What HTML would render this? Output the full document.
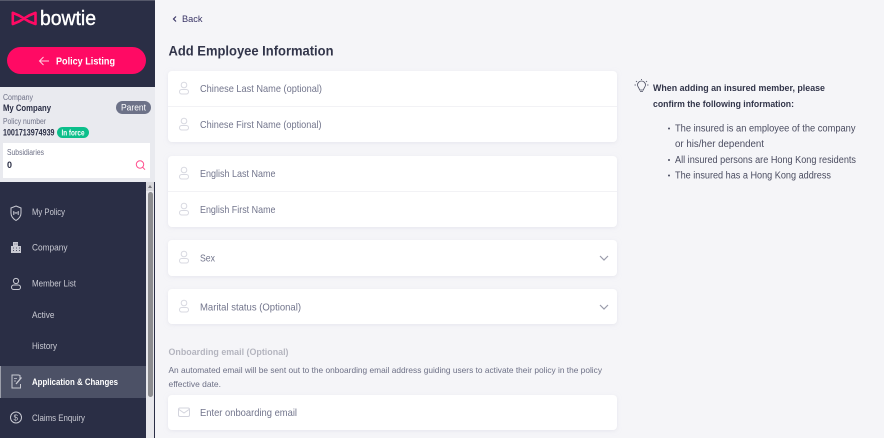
<!DOCTYPE html>
<html><head><meta charset="utf-8"><style>
html,body{margin:0;padding:0;width:884px;height:438px;overflow:hidden;background:#f5f5f8}
svg{display:block}
text{font-family:"Liberation Sans",sans-serif}
</style></head><body>
<svg width="884" height="438" viewBox="0 0 884 438" xmlns="http://www.w3.org/2000/svg">
<defs>
<filter id="s" x="-5%" y="-20%" width="110%" height="140%"><feDropShadow dx="0" dy="1" stdDeviation="2" flood-color="#dcdce6" flood-opacity=".6"/></filter>
<g id="p" fill="none" stroke="#d8d9e1" stroke-width="1"><circle cx="0" cy="-3" r="2.8"/><rect x="-4.500" y="1.500" width="9" height="4.500" rx="2.250"/></g>
</defs>
<rect width="884" height="438" fill="#f5f5f8"/>

<!-- sidebar -->
<rect width="155" height="87" fill="#2a2e45"/>
<rect y="0" width="155" height="1" fill="#55586a"/>
<rect y="87" width="155" height="95" fill="#e9eaef"/>
<rect y="182" width="155" height="256" fill="#2a2e45"/>
<path d="M12.800 12.800 L19 15.500 L24 18.500 L29 15.500 L35.500 12.800 V24 L29 21.500 L24 18.500 L19 21.500 L12.800 24 Z" fill="none" stroke="#ff0a64" stroke-width="2.600" stroke-linejoin="round"/>
<text x="40" y="25" font-size="20" fill="#fff" stroke="#fff" stroke-width=".4" textLength="56" lengthAdjust="spacingAndGlyphs">bowtie</text>
<rect x="7" y="47" width="139" height="27" rx="13.500" fill="#ff0a64"/>
<path d="M49 61 H39.500 M43.500 57 L39.500 61 L43.500 65" fill="none" stroke="#ffd0e0" stroke-width="1"/>
<text x="56" y="64.500" font-size="10.500" font-weight="bold" fill="#fff" textLength="59" lengthAdjust="spacingAndGlyphs">Policy Listing</text>

<text x="3" y="100" font-size="8" fill="#6d7086" textLength="30" lengthAdjust="spacingAndGlyphs">Company</text>
<text x="3" y="111" font-size="9" font-weight="bold" fill="#2a2e45" textLength="48" lengthAdjust="spacingAndGlyphs">My Company</text>
<rect x="116" y="101" width="35" height="13" rx="6.500" fill="#6d7288"/>
<text x="121" y="110.500" font-size="9.500" fill="#fff" textLength="25" lengthAdjust="spacingAndGlyphs">Parent</text>
<text x="3" y="124" font-size="8" fill="#6d7086" textLength="43" lengthAdjust="spacingAndGlyphs">Policy number</text>
<text x="3" y="135.500" font-size="9.500" font-weight="bold" fill="#2a2e45" textLength="51.500" lengthAdjust="spacingAndGlyphs">1001713974939</text>
<rect x="57" y="127" width="32" height="11" rx="5.500" fill="#0cbf8b"/>
<text x="61.500" y="135.500" font-size="8" font-weight="bold" fill="#fff" textLength="23" lengthAdjust="spacingAndGlyphs">In force</text>
<rect x="3" y="143" width="147" height="35" fill="#fff"/>
<text x="7" y="155" font-size="8" fill="#6d7086" textLength="37" lengthAdjust="spacingAndGlyphs">Subsidiaries</text>
<text x="7" y="168" font-size="9" font-weight="bold" fill="#2a2e45">0</text>
<circle cx="140" cy="164.500" r="3.700" fill="none" stroke="#ff4d8d" stroke-width="1"/>
<path d="M142.700 167.300 L145 169.700" stroke="#ff4d8d" stroke-width="1"/>

<!-- scrollbar -->
<rect x="146" y="182" width="8" height="256" fill="#e8e8ec"/>
<rect x="146" y="182" width="8" height="9" fill="#d8d8dc"/>
<path d="M148 188 L150 185 L152 188 Z" fill="#77777c"/>
<rect x="148" y="192" width="5" height="205" rx="2.500" fill="#8d8d90"/>

<!-- nav -->
<rect y="366" width="146" height="32" fill="#4c5166"/>
<rect y="366" width="1" height="32" fill="#9b9eaa"/>
<g fill="#c9cad3" font-size="9.500">
<text x="32" y="215" textLength="33" lengthAdjust="spacingAndGlyphs">My Policy</text>
<text x="32" y="250.500" textLength="35.500" lengthAdjust="spacingAndGlyphs">Company</text>
<text x="32" y="286.500" textLength="44" lengthAdjust="spacingAndGlyphs">Member List</text>
<text x="32" y="318" textLength="22.500" lengthAdjust="spacingAndGlyphs">Active</text>
<text x="32" y="349" textLength="25" lengthAdjust="spacingAndGlyphs">History</text>
<text x="32" y="421" textLength="53" lengthAdjust="spacingAndGlyphs">Claims Enquiry</text>
</g>
<text x="32" y="385" font-size="9.500" font-weight="bold" fill="#fff" textLength="86" lengthAdjust="spacingAndGlyphs">Application &amp; Changes</text>
<g fill="none" stroke="#c9cad3" stroke-width="1">
<path d="M16 206 L21 208 V213 C21 217 18.500 219 16 220.500 C13.500 219 11 217 11 213 V208 Z"/>
<path d="M13.500 211.500 L16 213 L18.500 211.500 V214.500 L16 213 L13.500 214.500 Z" stroke-width=".7"/>
<path d="M20 379 V375.500 L18.500 375 H12 V388 H20.500 V384"/>
<path d="M16 384 L21.500 377.500" stroke-width="1.300"/>
<path d="M14 378.500 H17 M14 381 H16" stroke-width=".7"/>
<circle cx="16" cy="417.500" r="5.500"/>
<text x="13.500" y="420.500" font-size="8" fill="#c9cad3" stroke="none">$</text>
<circle cx="16" cy="281" r="2.600"/>
<rect x="11.500" y="285" width="9" height="4.500" rx="2.250"/>
</g>
<path d="M13 242 H18 V246 H21 V253 H11 V246 H13 Z" fill="#c9cad3"/>
<path d="M14.500 244 h.8 M16.500 244 h.8 M13 248 h1 M16 248 h1 M19 248 h1 M13 250.500 h1 M16 250.500 h1 M19 250.500 h1" stroke="#2a2e45" stroke-width=".8"/>

<!-- main header -->
<path d="M176 16.500 L173.500 19 L176 21.500" fill="none" stroke="#3a3566" stroke-width="1.200"/>
<text x="182" y="22" font-size="9.500" fill="#3a3566" textLength="20.500" lengthAdjust="spacingAndGlyphs">Back</text>
<text x="168.500" y="55.500" font-size="13.500" font-weight="bold" fill="#32354a" textLength="165" lengthAdjust="spacingAndGlyphs">Add Employee Information</text>

<!-- cards -->
<g fill="#fff" filter="url(#s)">
<rect x="168" y="71" width="449" height="71" rx="4"/>
<rect x="168" y="156" width="449" height="71" rx="4"/>
<rect x="168" y="240" width="449" height="36" rx="4"/>
<rect x="168" y="289" width="449" height="35" rx="4"/>
<rect x="168" y="395" width="449" height="35" rx="4"/>
</g>
<rect x="168" y="106" width="449" height="1" fill="#f2f2f5"/>
<rect x="168" y="191" width="449" height="1" fill="#f2f2f5"/>

<use href="#p" x="184" y="88"/>
<use href="#p" x="184" y="124"/>
<use href="#p" x="184" y="173"/>
<use href="#p" x="184" y="209"/>
<use href="#p" x="184" y="257"/>
<use href="#p" x="184" y="306"/>
<g fill="#72758c" font-size="10.500">
<text x="200" y="92" textLength="122" lengthAdjust="spacingAndGlyphs">Chinese Last Name (optional)</text>
<text x="200" y="128" textLength="121.500" lengthAdjust="spacingAndGlyphs">Chinese First Name (optional)</text>
<text x="200" y="177" textLength="75.500" lengthAdjust="spacingAndGlyphs">English Last Name</text>
<text x="200" y="213" textLength="75.500" lengthAdjust="spacingAndGlyphs">English First Name</text>
<text x="200" y="261.500" textLength="15" lengthAdjust="spacingAndGlyphs">Sex</text>
<text x="200" y="310.500" textLength="101" lengthAdjust="spacingAndGlyphs">Marital status (Optional)</text>
<text x="200" y="416" textLength="97" lengthAdjust="spacingAndGlyphs">Enter onboarding email</text>
</g>
<path d="M600 256 L604 260 L608 256 M600 305 L604 309 L608 305" fill="none" stroke="#9a9cab" stroke-width="1.200"/>

<text x="168.500" y="355" font-size="9.500" font-weight="bold" fill="#b4b5bf" textLength="120" lengthAdjust="spacingAndGlyphs">Onboarding email (Optional)</text>
<text x="168.500" y="373" font-size="8.500" fill="#6d7086" textLength="433.500" lengthAdjust="spacingAndGlyphs">An automated email will be sent out to the onboarding email address guiding users to activate their policy in the policy</text>
<text x="168.500" y="387" font-size="8.500" fill="#6d7086" textLength="52.500" lengthAdjust="spacingAndGlyphs">effective date.</text>
<rect x="178.500" y="408" width="11" height="8.500" rx="1.500" fill="none" stroke="#d3d4dd"/>
<path d="M179 409.500 L184 413 L189 409.500" fill="none" stroke="#d3d4dd"/>

<!-- right info -->
<g fill="none" stroke="#4a4c60" stroke-width=".8">
<path d="M639.500 90 C639.500 88 637.500 87 637.500 85 A4 4 0 0 1 645.500 85 C645.500 87 643.500 88 643.500 90 Z"/>
<path d="M640 91.500 H643 M634.500 85 H636 M647 85 H648.500 M636 81 L637 82 M647 81 L646 82 M641.500 79 V80"/>
</g>
<g font-weight="bold" fill="#32354a" font-size="9.500">
<text x="653" y="91" textLength="172" lengthAdjust="spacingAndGlyphs">When adding an insured member, please</text>
<text x="653" y="107" textLength="141" lengthAdjust="spacingAndGlyphs">confirm the following information:</text>
</g>
<g fill="#4a4c60" font-size="10">
<circle cx="669" cy="128.500" r="1"/><circle cx="669" cy="160" r="1"/><circle cx="669" cy="175.500" r="1"/>
<text x="675" y="131.500" textLength="180.500" lengthAdjust="spacingAndGlyphs">The insured is an employee of the company</text>
<text x="675" y="147" textLength="89" lengthAdjust="spacingAndGlyphs">or his/her dependent</text>
<text x="675" y="163" textLength="181" lengthAdjust="spacingAndGlyphs">All insured persons are Hong Kong residents</text>
<text x="675" y="178.500" textLength="156" lengthAdjust="spacingAndGlyphs">The insured has a Hong Kong address</text>
</g>
</svg>
</body></html>
